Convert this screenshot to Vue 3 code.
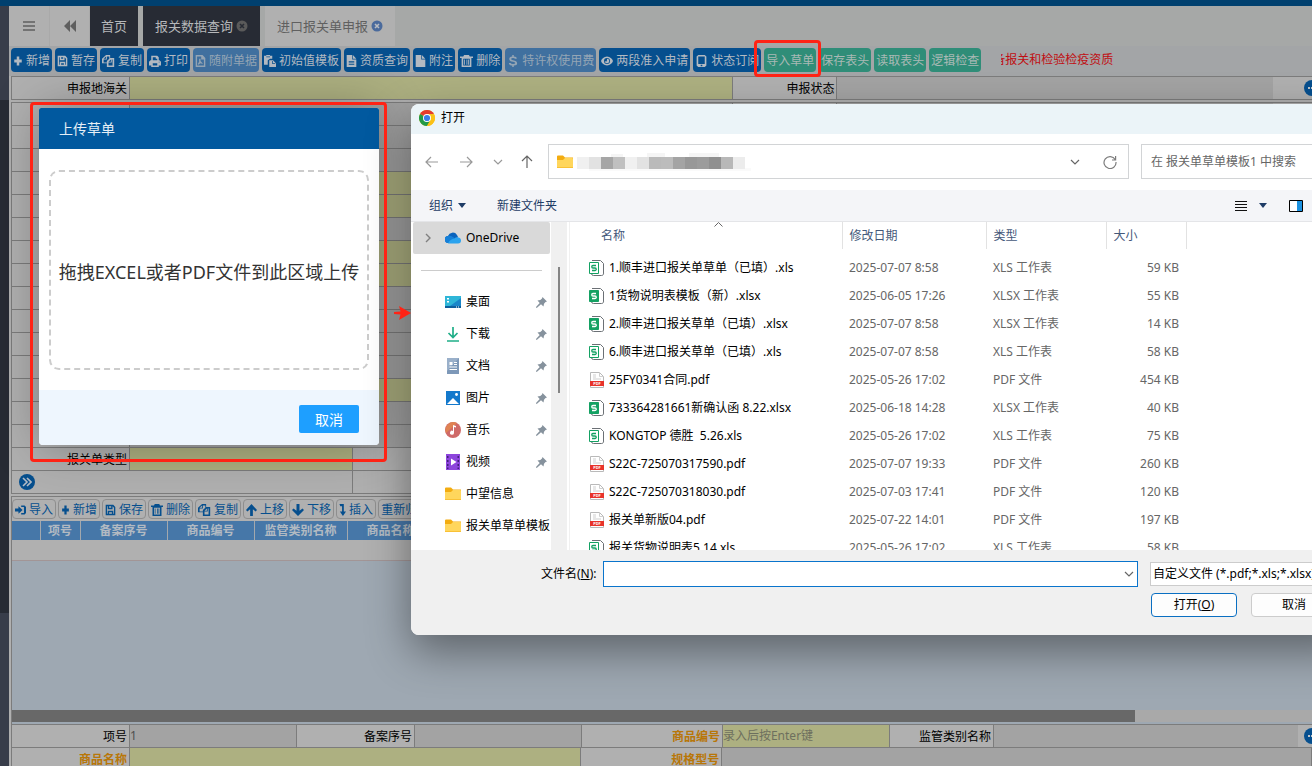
<script setup>
import { ref } from 'vue'

const glyphs = {
  plus: 'M6 2h4v4h4v4h-4v4H6v-4H2V6h4z',
  save: 'M1 1h11l3 3v11H1zM3 3v10h1V9h8v4h1V5l-2-2v4H4V3zM6 3v2h3V3zM6 11v2h4v-2z',
  copy: 'M5 0h5v4h5v12H6v-5H0V5zM5 2L2 5h3zM6 2v4H2v4h4V8l3-3V2zM11 6L8 9h3zM12 6v4H8v4h5V6z',
  print: 'M3 1h8l2 2v4h1l2 2v5h-3v2H3v-2H0V9l2-2h1zM5 3v4h6V5H9V3zM5 11v3h6v-3zM13 9v1h1V9z',
  pdf: 'M1 0h10l4 4v12H1zM3 2v12h10V6H9V2zM6 5h2v3l3 3v1l-3-1-3 2-1-1 2-3z',
  paste: 'M0 1h3V0h5v1h3v4H8L5 7v6H0zM7 7h5l4 4v5H7zM11 8v4h4v-1h-3V8zM3 2v1h5V2z',
  doc: 'M1 0h8v6h6v10H1zM10 0l5 5h-5zM4 8v1h8V8zM4 10v1h8v-1zM4 12v1h8v-1z',
  page: 'M1 0h8v6h6v10H1zM10 0l5 5h-5z',
  trash: 'M5 0h6l1 2h4v2h-2v12H2V4H0V2h4zM4 5v9h8V5zM5 6h1v7H5zM8 6h1v7H8zM10 6h1v7h-1z',
  dollar: 'M7 0h2v2q4 0 4 3h-2.500Q10.500 4 8 4 5.500 4 5.500 5.300T8 7q5.500 .8 5.500 4T9 14v2H7v-2q-4.500-.3-4.500-3.500H5Q5 12 8 12t3-1.200Q11 9.500 8 9 3 8.300 3 5.200T7 2z',
  eye: 'M8 2c4 0 7 3 8 6-1 3-4 6-8 6S1 11 0 8c1-3 4-6 8-6zM8 4a4 4 0 1 0 0 8 4 4 0 1 0 0-8zM8 5a3 3 0 1 1 0 6 3 3 0 0 1-3-3l2 1 1-2z',
  phone: 'M4 0h8l2 2v12l-2 2H4l-2-2V2zM4 2v10h8V2zM7 13v2h2v-2z',
  login: 'M0 6h5V3l6 5-6 5v-3H0zM9 2h5l2 2v8l-2 2H9v-2h4V4H9z',
  up: 'M8 0l8 8-2 2-4-3v9H6V7l-4 3-2-2z',
  down: 'M8 16l8-8-2-2-4 3V0H6v9L2 6 0 8z',
  turn: 'M1 0h10v10h5l-7 6-7-6h5V3H3z'
}

const tools = [
  { t: '新增', i: 'plus', w: 10 }, { t: '暂存', i: 'save', w: 11 }, { t: '复制', i: 'copy', w: 13 },
  { t: '打印', i: 'print', w: 12 }, { t: '随附单据', i: 'pdf', w: 11, k: 'off' },
  { t: '初始值模板', i: 'paste', w: 12 }, { t: '资质查询', i: 'doc', w: 11 }, { t: '附注', i: 'page', w: 11 },
  { t: '删除', i: 'trash', w: 13 }, { t: '特许权使用费', i: 'dollar', w: 12, k: 'off' },
  { t: '两段准入申请', i: 'eye', w: 12 }, { t: '状态订阅', i: 'phone', w: 13 },
  { t: '导入草单', k: 'green' }, { t: '保存表头', k: 'green' }, { t: '读取表头', k: 'green' }, { t: '逻辑检查', k: 'green' }
]

const rowTools = [
  { t: '导入', i: 'login', w: 11 }, { t: '新增', i: 'plus', w: 9 }, { t: '保存', i: 'save', w: 11 },
  { t: '删除', i: 'trash', w: 12 }, { t: '复制', i: 'copy', w: 13 }, { t: '上移', i: 'up', w: 11 },
  { t: '下移', i: 'down', w: 12 }, { t: '插入', i: 'turn', w: 7 }, { t: '重新归类' }
]

const formRows = ['g', 'g', 'g', 'y', 'y', 'g', 'y', 'y', 'g', 'g', 'g', 'g', 'y', 'g', 'g']

const places = [
  { n: '桌面', i: 'desktop', pin: true }, { n: '下载', i: 'download', pin: true },
  { n: '文档', i: 'docs', pin: true }, { n: '图片', i: 'pics', pin: true },
  { n: '音乐', i: 'music', pin: true }, { n: '视频', i: 'video', pin: true },
  { n: '中望信息', i: 'folder' }, { n: '报关单草单模板', i: 'folder' }
]

const files = [
  ['1.顺丰进口报关单草单（已填）.xls', '2025-07-07 8:58', 'XLS 工作表', '59 KB', 'xls'],
  ['1货物说明表模板（新）.xlsx', '2025-06-05 17:26', 'XLSX 工作表', '55 KB', 'xlsx'],
  ['2.顺丰进口报关草单（已填）.xlsx', '2025-07-07 8:58', 'XLSX 工作表', '14 KB', 'xlsx'],
  ['6.顺丰进口报关草单（已填）.xls', '2025-07-07 8:58', 'XLS 工作表', '58 KB', 'xls'],
  ['25FY0341合同.pdf', '2025-05-26 17:02', 'PDF 文件', '454 KB', 'pdf'],
  ['733364281661新确认函 8.22.xlsx', '2025-06-18 14:28', 'XLSX 工作表', '40 KB', 'xlsx'],
  ['KONGTOP 德胜\u00a0 5.26.xls', '2025-05-26 17:02', 'XLS 工作表', '75 KB', 'xls'],
  ['S22C-725070317590.pdf', '2025-07-07 19:33', 'PDF 文件', '260 KB', 'pdf'],
  ['S22C-725070318030.pdf', '2025-07-03 17:41', 'PDF 文件', '120 KB', 'pdf'],
  ['报关单新版04.pdf', '2025-07-22 14:01', 'PDF 文件', '197 KB', 'pdf'],
  ['报关货物说明表5.14.xls', '2025-05-26 17:02', 'XLS 工作表', '58 KB', 'xls']
]

/* blurred path segments: x, width, grey level */
const mosaic = [
  [0, 12, 240], [12, 12, 226], [24, 12, 166], [36, 12, 192], [48, 12, 240], [60, 12, 226],
  [72, 12, 186], [84, 12, 188], [96, 12, 164], [108, 12, 152], [120, 12, 156], [132, 12, 144],
  [144, 12, 184], [156, 12, 236]
]

const fileName = ref('')
</script>

<template>
  <div class="app">
    <div class="topbar"></div>
    <div class="shell">
      <aside class="side"><i></i><i class="deep"></i><i class="rest"></i></aside>
      <main class="main">
        <nav class="tabs">
          <button class="sq" aria-label="菜单"><svg width="12" height="12" viewBox="0 0 12 12"><path d="M0 2h12M0 6h12M0 10h12" stroke="#5f5f5f" stroke-width="1.5" /></svg></button>
          <button class="sq two" aria-label="向左"><svg width="12" height="12" viewBox="0 0 12 12"><path d="M6 0v12L0 6zM12 0v12L6 6z" fill="#5f5f5f" /></svg></button>
          <a href="#" class="tab dark home">首页</a>
          <a href="#" class="tab dark">报关数据查询<svg width="12" height="12" viewBox="0 0 12 12"><circle cx="6" cy="6" r="5.5" fill="#5a5a5a" /><path d="M4 4l4 4M8 4l-4 4" stroke="#272b34" stroke-width="1.6" /></svg></a>
          <a href="#" class="tab lite">进口报关单申报<svg width="12" height="12" viewBox="0 0 12 12"><circle cx="6" cy="6" r="5.5" fill="#4a6a9c" /><path d="M4 4l4 4M8 4l-4 4" stroke="#b8bcc2" stroke-width="1.6" /></svg></a>
        </nav>

        <div class="toolbar">
          <button v-for="b in tools" :key="b.t" :class="['tool', b.k]">
            <svg v-if="b.i" :width="b.w" height="12" viewBox="0 0 16 16" preserveAspectRatio="none"><path :d="glyphs[b.i]" fill="currentColor" fill-rule="evenodd" /></svg>{{ b.t }}
          </button>
          <p class="notice"><span>备报关和检验检疫资质</span></p>
        </div>

        <section class="form">
          <div class="row first">
            <label class="lab" for="customs">申报地海关</label><input id="customs" class="cell y a">
            <label class="lab mid" for="status">申报状态</label><input id="status" class="cell g b" readonly>
            <div class="more"><button class="dots" aria-label="更多"><i></i><i></i><i></i></button></div>
          </div>
        </section>

        <section class="form tall">
          <div v-for="(k, n) in formRows" :key="n" class="row">
            <span class="lab"></span><input :class="['cell', k, 'a']" :aria-label="'字段' + (n + 1)">
            <span class="lab mid"></span><input class="cell g b" :aria-label="'附加字段' + (n + 1)">
            <div class="more"></div>
          </div>
          <div class="row">
            <label class="lab" for="dtype">报关单类型</label><input id="dtype" class="cell y short"><span class="cell plain"></span>
          </div>
          <div class="row">
            <div class="expand"><button class="round" aria-label="展开"><svg width="10" height="10" viewBox="0 0 10 10"><path d="M1 1l4 4-4 4M5 1l4 4-4 4" fill="none" stroke="#b4bcc6" stroke-width="1.6" /></svg></button></div><span class="cell plain"></span>
          </div>
        </section>

        <section class="goods">
          <div class="mini">
            <button v-for="b in rowTools" :key="b.t" class="mbtn">
              <svg v-if="b.i" :width="b.w" height="12" viewBox="0 0 16 16" preserveAspectRatio="none"><path :d="glyphs[b.i]" fill="currentColor" fill-rule="evenodd" /></svg>{{ b.t }}
            </button>
          </div>
          <table class="grid">
            <colgroup><col class="c1"><col class="c2"><col class="c3"><col class="c3"><col class="c4"><col class="c5"><col></colgroup>
            <thead><tr><th></th><th>项号</th><th>备案序号</th><th>商品编号</th><th>监管类别名称</th><th>商品名称</th><th></th></tr></thead>
            <tbody><tr><td colspan="7"></td></tr></tbody>
          </table>
          <div class="blank"></div>
          <div class="hscroll"><i></i></div>
        </section>

        <section class="form bottom">
          <div class="row">
            <label class="lab" for="no">项号</label><input id="no" class="cell g q" value="1">
            <label class="lab" for="rec">备案序号</label><input id="rec" class="cell g q">
            <label class="lab l3 hot" for="code">商品编号</label><input id="code" class="cell y q" placeholder="录入后按Enter键">
            <label class="lab mid" for="cat">监管类别名称</label><input id="cat" class="cell g r">
            <div class="more slim"><button class="dots" aria-label="更多"><i></i><i></i><i></i></button></div>
          </div>
          <div class="row">
            <label class="lab hot" for="gname">商品名称</label><input id="gname" class="cell y s">
            <label class="lab l3 hot" for="spec">规格型号</label><input id="spec" class="cell g t">
          </div>
        </section>
      </main>
    </div>

    <section class="upload">
      <h2>上传草单</h2>
      <div class="drop">拖拽EXCEL或者PDF文件到此区域上传</div>
      <footer><button>取消</button></footer>
    </section>

    <section class="dialog">
      <header class="dtitle">
        <svg width="16" height="16" viewBox="0 0 16 16"><circle cx="8" cy="8" r="8" fill="#fbc116" /><path d="M8 8L1.07 4A8 8 0 0 1 14.93 4z" fill="#e33b2e" /><path d="M8 8L1.07 4A8 8 0 0 0 8 16l3.5-6z" fill="#229a48" /><path d="M8 4h6.93A8 8 0 0 1 8 16l3.5-6z" fill="#fbc116" /><circle cx="8" cy="8" r="4" fill="#fff" /><circle cx="8" cy="8" r="3.1" fill="#3a7ee8" /></svg>
        打开
      </header>
      <div class="dnav">
        <button aria-label="后退"><svg width="14" height="14" viewBox="0 0 14 14"><path d="M13 7H1M6 2L1 7l5 5" class="ln pale" /></svg></button>
        <button aria-label="前进"><svg width="14" height="14" viewBox="0 0 14 14"><path d="M1 7h12M8 2l5 5-5 5" class="ln pale" /></svg></button>
        <button class="nar" aria-label="最近"><svg width="10" height="10" viewBox="0 0 10 10"><path d="M1 3l4 4 4-4" class="ln pale" /></svg></button>
        <button class="nar" aria-label="向上"><svg width="14" height="14" viewBox="0 0 14 14"><path d="M7 13V1M2 6l5-5 5 5" class="ln" /></svg></button>
        <div class="addr">
          <svg width="16" height="14" viewBox="0 0 16 14"><path d="M0 1.500A1 1 0 0 1 1 .5h5l2 2h8V13H0z" fill="#f3ac10" /><path d="M0 5h6l2-2h7a1 1 0 0 1 1 1v8.500H0z" fill="#ffd65c" /></svg>
          <svg class="mosaic" width="182" height="18" viewBox="0 0 182 18">
            <path d="M34 1h12v3h-12zM70 0h18v4H70zM112 0h30v4h-30z" fill="#f5f5f5" /><path d="M12 15h162v3H12z" fill="#fafafa" />
            <rect v-for="m in mosaic" :key="m[0]" :x="m[0]" y="4" :width="m[1]" height="12" :fill="`rgb(${m[2]},${m[2]},${m[2]})`" />
          </svg>
          <span class="grow"></span>
          <svg width="10" height="10" viewBox="0 0 10 10"><path d="M1 3l4 4 4-4" class="ln" /></svg>
          <svg class="reload" width="14" height="14" viewBox="0 0 14 14"><path d="M12.2 4.5A6 6 0 1 0 13 7M12.6 1v4H9" class="ln soft" /></svg>
        </div>
        <input class="search" aria-label="搜索" placeholder="在 报关单草单模板1 中搜索">
      </div>
      <div class="dcmd">
        <button>组织 <svg width="8" height="5" viewBox="0 0 8 5"><path d="M0 0h8L4 5z" fill="#1e3c66" /></svg></button>
        <button class="nf">新建文件夹</button>
        <span class="grow"></span>
        <button class="view" aria-label="视图"><svg width="12" height="12" viewBox="0 0 12 12"><path d="M0 1.5h12M0 4.5h12M0 7.5h12M0 10.5h12" stroke="#111" /></svg></button>
        <button class="drp" aria-label="更多视图"><svg width="8" height="5" viewBox="0 0 8 5"><path d="M0 0h8L4 5z" fill="#1e3c66" /></svg></button>
        <button aria-label="预览窗格"><svg width="14" height="12" viewBox="0 0 14 12"><path d="M.5.5h13v11H.5z" fill="#fff" stroke="#000" /><path d="M8 1h5v10H8z" fill="#1b91e0" /></svg></button>
      </div>
      <div class="dbody">
        <nav class="places">
          <a href="#" class="one">
            <svg class="chev" width="6" height="10" viewBox="0 0 6 10"><path d="M1 1l4 4-4 4" fill="none" stroke="#808080" stroke-width="1.4" /></svg>
            <svg width="16" height="12" viewBox="0 0 16 12"><path d="M3.5 11A3.5 3.5 0 0 1 3 4a5 5 0 0 1 9-1l1 2-5 6z" fill="#0a63bd" /><path d="M3.500 11a3.500 3.500 0 0 1-.5-7c3-1 5 1 7 2.500L6 11z" fill="#1580d8" /><path d="M3 11.500C4 8.500 7 7 9.500 6.500 11 4.500 16 5 16 8.500a3 3 0 0 1-3 3z" fill="#2ba3ee" /></svg>
            OneDrive</a>
          <hr>
          <a v-for="p in places" :key="p.n" href="#" class="place">
            <svg width="16" height="16" viewBox="0 0 16 16">
              <template v-if="p.i === 'desktop'"><path d="M0 2h16v12H0z" fill="#1a86c9" /><path d="M0 2h16v2L5 12H0z" fill="#2fb6d8" /><path d="M2 4h2v1.500H2zM2 7h2v1.500H2z" fill="#fff" /><path d="M0 12h16v2H0z" fill="#0d5f9e" /><path d="M11 12.500h1v1h-1zM13 12.500h1v1h-1z" fill="#fff" /></template>
              <template v-else-if="p.i === 'download'"><path d="M8 1v10M3.500 7L8 11.500 12.500 7M2 15h12" fill="none" stroke="#1fae88" stroke-width="1.700" /></template>
              <template v-else-if="p.i === 'docs'"><path d="M2 0h12v16H2z" fill="#7d98b8" /><path d="M2 0h12L2 13z" fill="#9ab0ca" /><path d="M4.500 4h3v3h-3zM9 4h3v1H9zM9 6h3v1H9zM4.500 8.500h7.500v1H4.500zM4.500 11h7.500v1H4.500z" fill="#fff" /></template>
              <template v-else-if="p.i === 'pics'"><path d="M1 1h14v14H1z" fill="#1479cc" /><path d="M2 14l6-6 6 6z" fill="#fff" /><circle cx="11.500" cy="4.500" r="1.400" fill="#fff" /></template>
              <template v-else-if="p.i === 'music'"><circle cx="8" cy="8" r="8" fill="#cf6a68" /><path d="M1 11A8 8 0 0 1 12 1z" fill="#df8353" /><path d="M8 3l3 1v1.500L9 5v5.500a2 2 0 1 1-1-1.500z" fill="#fff" /></template>
              <template v-else-if="p.i === 'video'"><path d="M1 0h14v16H1z" fill="#8d45dc" /><path d="M2 2h1.500v2H2zM2 6h1.500v2H2zM2 10h1.500v2H2zM2 13.500h1.500V15H2zM12.500 2H14v2h-1.500zM12.500 6H14v2h-1.500zM12.500 10H14v2h-1.500zM12.500 13.500H14V15h-1.500z" fill="#43207a" /><path d="M6 4.500l5.500 3.500L6 11.500z" fill="#fff" /></template>
              <template v-else><path d="M0 2.500a1 1 0 0 1 1-1h5l2 2h8V14H0z" fill="#f3ac10" /><path d="M0 6h6l2-2h7a1 1 0 0 1 1 1v8.500H0z" fill="#ffd65c" /></template>
            </svg>
            <span class="nm">{{ p.n }}</span>
            <svg v-if="p.pin" class="pin" width="11" height="11" viewBox="0 0 11 11"><path d="M6.500 0L11 4.500 9.500 5 8 6.800 7.500 9.500 5 7.200 1 10.800H0V10L3.700 6 1.500 3.500 4.300 3 6 1.500z" fill="#86929d" /></svg>
          </a>
        </nav>
        <div class="vscroll"><i></i></div>
        <div class="list">
          <svg class="sort" width="9" height="5" viewBox="0 0 9 5"><path d="M.5 4.500l4-4 4 4" fill="none" stroke="#666" /></svg>
          <table>
            <colgroup><col class="n"><col class="d"><col class="k"><col class="z"><col></colgroup>
            <thead><tr><th>名称</th><th>修改日期</th><th>类型</th><th>大小</th><th></th></tr></thead>
            <tbody>
              <tr v-for="f in files" :key="f[0]">
                <td class="fn">
                  <svg width="16" height="16" viewBox="0 0 16 16">
                    <template v-if="f[4] === 'pdf'"><path d="M1.500.5h9l4 4v11h-13z" fill="#fff" stroke="#b9b9b9" /><path d="M10.500.5v4h4M4 3h3M4 5h3M4 7h8" stroke="#cfcfcf" fill="none" /><path d="M1 9h14v5H1z" fill="#e8332a" /><text x="8" y="13.200" font-size="4" font-weight="700" text-anchor="middle" fill="#fff">PDF</text></template>
                    <template v-else>
                      <path d="M3 .5h8.500l3 3V13a2 2 0 0 1-2 2.500H4.500q-2 0-2-2" fill="#fff" stroke="#6b7075" />
                      <path d="M.5 2.500h9v11h-9z" :fill="f[4] === 'xlsx' ? '#14a163' : '#fff'" stroke="#14a163" />
                      <path d="M7 5.500H4A1 1 0 0 0 4 8h2a1 1 0 0 1 0 2.500H3" fill="none" :stroke="f[4] === 'xlsx' ? '#fff' : '#14a163'" stroke-width="1.300" />
                    </template>
                  </svg>{{ f[0] }}
                </td>
                <td>{{ f[1] }}</td><td>{{ f[2] }}</td><td class="sz">{{ f[3] }}</td><td></td>
              </tr>
            </tbody>
          </table>
        </div>
      </div>
      <footer class="dfoot">
        <div class="line">
          <label for="fname">文件名(<u>N</u>):</label>
          <div class="combo"><input id="fname" v-model="fileName"><svg width="10" height="10" viewBox="0 0 10 10"><path d="M1 3l4 4 4-4" class="ln" /></svg></div>
          <select aria-label="文件类型"><option>自定义文件 (*.pdf;*.xls;*.xlsx)</option></select>
        </div>
        <div class="acts"><button class="pri">打开(<u>O</u>)</button><button>取消</button></div>
      </footer>
    </section>

    <div class="mark m1"></div>
    <div class="mark m2"></div>
    <svg class="arrow" width="17" height="14" viewBox="0 0 17 14"><path d="M0 6l6.500-.5L5 0l12 7L5 14l1.500-5.500L0 8z" fill="#ff2315" /></svg>
  </div>
</template>

<style>
html, body { height: 100%; overflow: hidden; }
</style>

<style scoped>
* { box-sizing: border-box; }
.app {
  position: relative; height: 100vh; overflow: hidden; display: flex; flex-direction: column;
  background: #b0b0b0; color: #000; font: 12px/16px "Noto Sans", "Noto Sans CJK SC", sans-serif;
}
button, input, select { font: inherit; color: inherit; margin: 0; padding: 0; border: 0; border-radius: 0; background: none; outline: 0; }
a { color: inherit; text-decoration: none; }
svg { flex: none; display: block; }
.topbar { flex: none; height: 6px; background: #00406f; }
.shell { flex: 1; display: flex; min-height: 0; }
.side { flex: none; width: 9px; display: flex; flex-direction: column; background: #383d4a; }
.side i { height: 94px; }
.side .deep { height: 513px; background: #272b34; }
.main { flex: 1; min-width: 0; display: flex; flex-direction: column; }

.tabs { flex: none; height: 40px; display: flex; background: #a6a8a7; font-size: 13px; }
.sq { width: 41px; display: flex; align-items: center; justify-content: center; background: #b0b0b0; border-right: 1px solid #a9a9a9; }
.two { width: 40px; }
.tab { display: flex; align-items: center; gap: 3px; margin-right: 5px; padding: 0 12px; }
.tab.home { padding: 0 11px; }
.dark { background: #272b34; color: #b6b8ba; }
.lite { background: #b0b0b0; color: #606060; }

.toolbar { flex: none; height: 30px; padding: 2px 2px 4px; display: flex; gap: 3px; background: #a3a5a7; }
.tool { flex: none; display: flex; align-items: center; gap: 3px; padding: 2px 2px 0; border-radius: 4px; background: #064f8e; color: #b3bac2; white-space: nowrap; }
.tool.off { background: #40709f; color: #94a5b5; }
.tool.green { background: #2f8d78; color: #a9b9b5; }
.notice { margin: 0 0 0 17px; width: 112px; height: 24px; line-height: 24px; overflow: hidden; display: flex; justify-content: flex-end; color: #c00d12; white-space: nowrap; }

.form { flex: none; margin-left: 2px; border: solid #7c7c7c; border-width: 1px 0 0 1px; overflow: hidden; }
.tall { margin-top: 2px; }
.row { display: flex; height: 23px; border-bottom: 1px solid #7c7c7c; }
.lab { flex: none; width: 118px; padding-right: 2px; border-right: 1px solid #7c7c7c; text-align: right; line-height: 24px; }
.mid { width: 104px; }
.l3 { width: 141px; }
.hot { color: #b87608; font-weight: 700; }
.cell { min-width: 0; border-right: 1px solid #7c7c7c; line-height: 16px; color: #4f4f4f; }
.cell::placeholder { color: #6d6f5e; opacity: 1; }
.y { background: #adb081; }
.g { background: #a3a3a3; }
.a { flex: 603 1 0; }
.b { flex: 436 1 0; border-right: 0; }
.q { flex: 167 1 0; }
.r { flex: 306 1 0; border-right: 0; }
.s { flex: 451 1 0; }
.t { flex: 590 1 0; }
.short { flex: none; width: 223px; }
.plain { flex: 1; border-right: 0; }
.more { flex: none; width: 39px; display: flex; align-items: center; justify-content: flex-end; }
.slim { width: 14px; }
.dots { flex: none; width: 16px; height: 16px; margin-right: -8px; border-radius: 50%; background: #064f8e; display: flex; align-items: center; justify-content: center; gap: 1px; }
.dots i { width: 2px; height: 2px; background: #c0c4c8; }
.expand { flex: none; width: 341px; padding-left: 7px; border-right: 1px solid #7c7c7c; display: flex; align-items: center; }
.round { width: 16px; height: 16px; border-radius: 50%; background: #064f8e; display: flex; align-items: center; justify-content: center; }

.goods { flex: 1; min-height: 0; margin: 2px 0 0 2px; border: solid #7c7c7c; border-width: 1px 0 0 1px; display: flex; flex-direction: column; }
.mini { flex: none; display: flex; gap: 2px; height: 24px; padding: 2px 0; }
.mbtn { flex: none; display: flex; align-items: center; gap: 3px; padding: 2px 2px 0; border: 1px solid #8e8e8e; border-radius: 4px; color: #064f8e; white-space: nowrap; }
.grid { flex: none; width: 100%; table-layout: fixed; border-collapse: collapse; }
.c1 { width: 28px; }
.c2 { width: 40px; }
.c3 { width: 87px; }
.c4 { width: 93px; }
.c5 { width: 87px; }
.grid th { height: 19px; padding: 0; border-right: 1px solid #a3a8ad; background: #4677a8; color: #b2bac2; line-height: 18px; white-space: nowrap; }
.grid td { height: 20px; padding: 0; border-bottom: 1px solid #a29596; background: #b0b0b0; }
.blank { flex: 1; background: #9ea8b2; }
.hscroll { flex: none; height: 14px; border-bottom: 2px solid #9ea8b2; background: #a9a9a9; }
.hscroll i { display: block; width: 86.4%; height: 12px; background: #686868; }
.bottom { height: 42px; }

.upload { position: absolute; left: 39px; top: 108px; width: 340px; background: #fff; border-radius: 2px 2px 4px 4px; overflow: hidden; box-shadow: 1px 1px 50px rgba(0, 0, 0, .3); }
.upload h2 { margin: 0; padding: 0 20px; height: 41px; background: #01599f; color: #e6eff6; font-size: 14px; font-weight: 400; line-height: 41px; }
.drop { height: 200px; margin: 21px 10px 20px; padding-top: 3px; border: 2px dashed #ccc; border-radius: 10px; display: flex; align-items: center; justify-content: center; font-size: 18px; color: #333; white-space: nowrap; }
.upload footer { height: 55px; padding: 15px 20px 0; background: #eef6fe; display: flex; justify-content: flex-end; align-items: flex-start; }
.upload footer button { width: 60px; height: 28px; padding-top: 2px; border-radius: 2px; background: #1e9fff; color: #fff; font-size: 14px; }

.dialog { position: absolute; left: 411px; right: -41px; top: 104px; background: #fff; border-radius: 8px; box-shadow: 0 16px 44px rgba(0, 0, 0, .42); }
.dtitle { height: 30px; padding: 0 8px 2px; display: flex; align-items: center; gap: 6px; background: #ebf4f8; border-radius: 8px 8px 0 0; }
.ln { fill: none; stroke: #666; stroke-width: 1.2; }
.pale { stroke: #999; }
.soft { stroke: #7c7c7c; }
.dnav { height: 56px; padding: 0 16px 1px 4px; display: flex; align-items: center; }
.dnav button { width: 34px; height: 32px; display: flex; align-items: center; justify-content: center; }
.dnav .nar { width: 29px; }
.addr { flex: 1; height: 35px; margin-left: 7px; padding: 0 11px 0 8px; display: flex; align-items: center; gap: 4px; border: 1px solid #d2d4d6; }
.grow { flex: 1; }
.reload { margin-left: 19px; }
.search { width: 196px; height: 35px; margin-left: 12px; padding: 0 9px; border: 1px solid #d2d4d6; }
.search::placeholder { color: #666; opacity: 1; }
.dcmd { height: 32px; padding: 0 50px 0 18px; display: flex; align-items: center; background: #f4f5f8; border-bottom: 1px solid #e4e5e8; color: #1e3c66; }
.dcmd button { display: flex; align-items: center; gap: 5px; }
.dcmd .nf { margin-left: 31px; }
.dcmd .drp { margin: 0 22px 0 12px; }
.dbody { height: 328px; display: flex; overflow: hidden; }
.places { flex: none; width: 140px; padding-left: 2px; overflow: hidden; }
.one { height: 32px; width: 137px; padding-left: 12px; display: flex; align-items: center; gap: 5px; background: #d9d9d9; border-radius: 2px; }
.chev { margin-right: 9px; }
.places hr { height: 1px; margin: 16px 9px 15px 8px; border: 0; background: #ccc; }
.place { height: 32px; padding: 0 4px 0 32px; display: flex; align-items: center; gap: 5px; white-space: nowrap; }
.nm { flex: 1; min-width: 0; }
.vscroll { flex: none; width: 16px; padding: 45px 0 0 7px; background: #f0f0f0; }
.vscroll i { display: block; width: 2px; height: 126px; background: #858585; }
.list { position: relative; flex: 1; margin-left: 2px; border-left: 1px solid #f0f0f0; }
.sort { position: absolute; left: 144px; top: 0; }
.list table { width: 100%; table-layout: fixed; border-collapse: collapse; color: #666; }
.n { width: 272px; }
.d { width: 144px; }
.k { width: 120px; }
.z { width: 80px; }
.list th { height: 27px; padding: 0 7px; border-right: 1px solid #e2e2e2; font-weight: 400; text-align: left; color: #44587a; }
.list th:first-child { padding-left: 31px; }
.list th:last-child { border: 0; }
.list td { height: 28px; padding: 0 7px; white-space: nowrap; }
.list tbody::before { content: ""; display: block; height: 5px; }
.list .fn { display: flex; align-items: center; gap: 4px; padding-left: 19px; color: #000; }
.list .sz { text-align: right; }
.dfoot { height: 85px; padding: 11px 16px 0 130px; background: #f0f0f0; border-radius: 0 0 8px 8px; }
.line { display: flex; align-items: center; }
.combo { flex: 1; display: flex; align-items: center; height: 26px; margin: 0 12px 0 6px; padding-right: 3px; border: 1px solid #0a74cc; background: #fff; }
.combo input { flex: 1; min-width: 0; height: 24px; padding: 0 4px; }
.line select { width: 187px; height: 24px; padding: 0 2px; border: 1px solid #ccc; background: #fff; appearance: none; }
.acts { display: flex; justify-content: flex-end; gap: 14px; margin-top: 6px; }
.acts button { width: 86px; height: 24px; border: 1px solid #ccc; border-radius: 4px; background: #fdfdfd; }
.acts .pri { border-color: #0a6fc2; }

.mark { position: absolute; border: 3px solid #ff2315; border-radius: 4px; }
.m1 { left: 754px; top: 40px; width: 67px; height: 37px; }
.m2 { left: 30px; top: 102px; width: 357px; height: 360px; }
.arrow { position: absolute; left: 394px; top: 306px; }
</style>
